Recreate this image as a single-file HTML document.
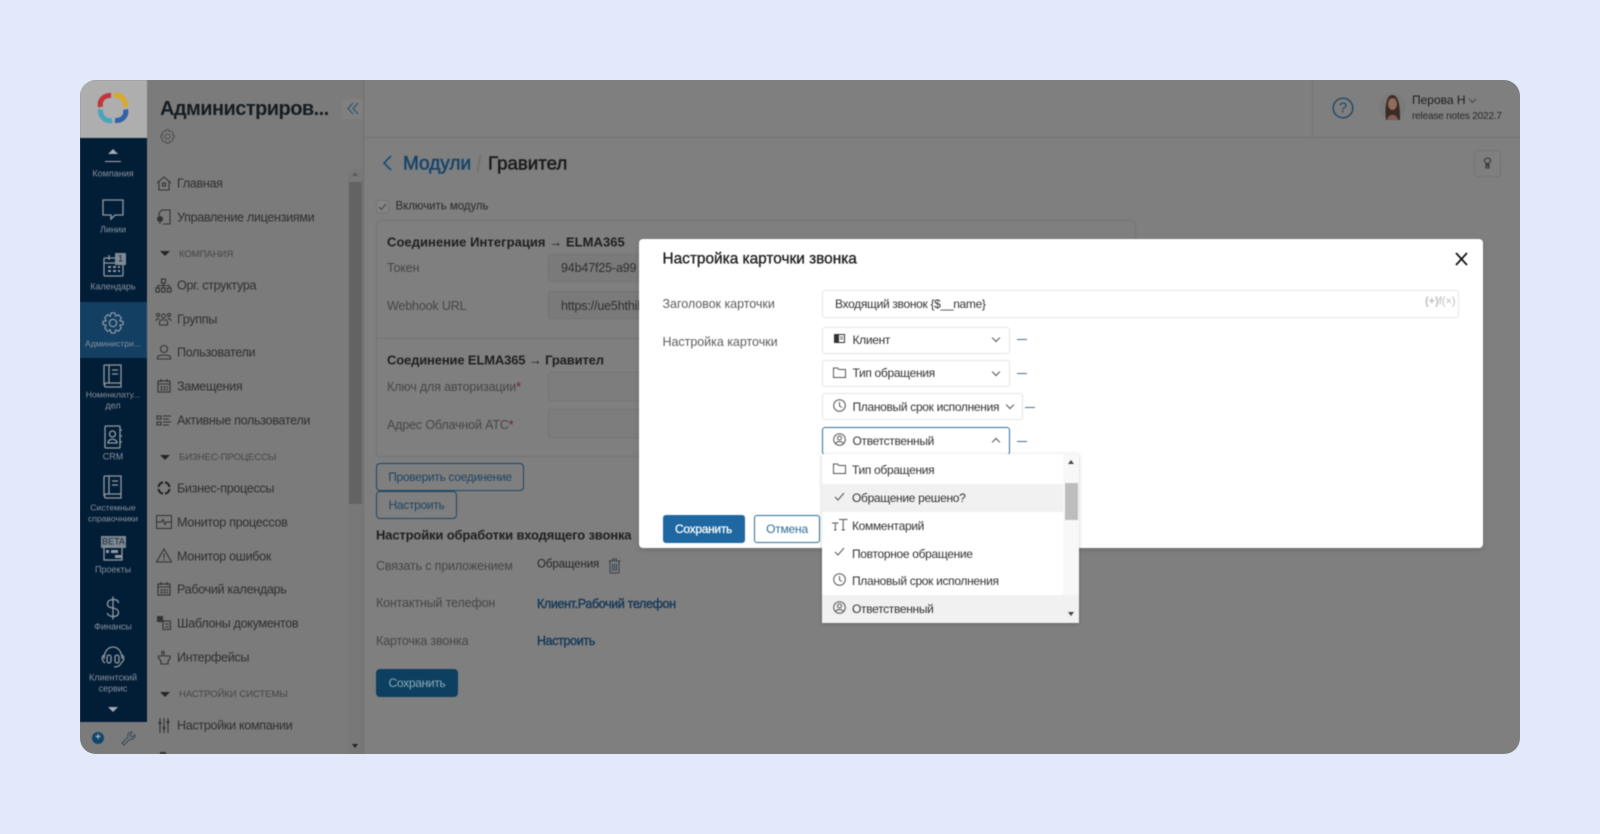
<!DOCTYPE html>
<html lang="ru"><head><meta charset="utf-8"><title>Настройка карточки звонка</title>
<style>
*{box-sizing:border-box}
html,body{margin:0;padding:0;width:1600px;height:834px;overflow:hidden;background:#e2e9fa;font-family:"Liberation Sans","Noto Sans CJK SC",sans-serif}
.abs,.t,.b,svg{position:absolute}
.t{white-space:nowrap;line-height:1;transform:translateY(-50%)}
.c{transform:translate(-50%,-50%);text-align:center}
#frame{position:absolute;left:80px;top:80px;width:1440px;height:674px;border-radius:16px;overflow:hidden;background:#7f7f7f}
#page{position:absolute;left:-80px;top:-80px;width:1600px;height:834px;filter:blur(.4px)}
.s{font-size:9px;color:#87919d;margin-top:.5px}
.m{font-size:12.6px;letter-spacing:-.33px;color:#2f2f2f;left:177px;margin-top:.6px}
.h{font-size:9.6px;letter-spacing:-.1px;color:#464646;left:179px;margin-top:1px}
.tri{position:absolute;left:160px;width:0;height:0;border-left:5px solid transparent;border-right:5px solid transparent;border-top:5px solid #252525}
svg.i{fill:none;stroke:#333;stroke-width:1.1}
svg.n{fill:none;stroke:#929ba5;stroke-width:1.3}
.lb{font-size:12.5px;letter-spacing:-.15px;color:#464646}
.bh{font-size:13px;letter-spacing:-.15px;font-weight:bold;color:#1f1f1f}
.lk{font-size:12.5px;letter-spacing:-.35px;color:#17395a;-webkit-text-stroke:.4px #17395a}
.bt{font-size:12px;letter-spacing:-.3px;color:#1f4463}
.inp{position:absolute;background:#7a7a7a;border:1px solid #747474;border-radius:3px}
.btn{position:absolute;border:1px solid #1c4766;border-radius:4px}
.sel{position:absolute;background:#fff;border:1px solid #e4e4e4;border-radius:3px}
.mt{font-size:12px;letter-spacing:-.32px;color:#333;margin-top:0}
.ml{font-size:12.5px;letter-spacing:-.03px;color:#5d5d5d}
svg.d{fill:none;stroke:#555;stroke-width:1}
.dash{position:absolute;width:10px;height:1px;background:#44708f}
.chev{position:absolute;width:6px;height:6px;border-right:1px solid #555;border-bottom:1px solid #555;transform:rotate(45deg)}
</style></head><body>
<div id="frame"><div id="page">

<!-- logo column -->
<div class="abs" style="left:80px;top:80px;width:67px;height:58px;background:#aeaeae"></div>
<svg style="left:97px;top:92px" width="32" height="32" viewBox="0 0 32 32" fill="none" stroke-width="5">
<path d="M3.500 15C2 8 7 3 14 3.500" stroke="#c0343a"/><path d="M17 3.500C24 2 29 8 28.500 15" stroke="#d8aa28"/>
<path d="M28.500 17.500C30 24 25 29 18 28.500" stroke="#2f62a8"/><path d="M15 28.500C8 30 3 24 3.500 17.500" stroke="#4ba3bd"/></svg>
<div class="abs" style="left:80px;top:138px;width:67px;height:584px;background:#021d36"></div>
<div class="abs" style="left:80px;top:302px;width:67px;height:56px;background:#123f62"></div>
<div class="abs" style="left:80px;top:722px;width:67px;height:32px;background:#7b7b7b"></div>

<div class="abs" style="left:108px;top:149px;width:0;height:0;border-left:5px solid transparent;border-right:5px solid transparent;border-bottom:5px solid #a5adb6"></div>
<div class="abs" style="left:105px;top:161px;width:16px;height:1px;background:#a5adb6"></div>
<div class="t c s" style="left:113px;top:173px">Компания</div>
<svg class="n" style="left:101px;top:198px" width="24" height="24" viewBox="0 0 24 24"><path d="M2 2H22V17H14L10 21V17H2Z"/></svg>
<div class="t c s" style="left:113px;top:229px">Линии</div>
<svg class="n" style="left:102px;top:254px" width="24" height="24" viewBox="0 0 24 24"><rect x="2" y="4" width="19" height="18" rx="1"/><path d="M2 9H21M7 1V6"/><path stroke-width="2" d="M6 13H9M11 13H14M16 13H18M6 17H9M11 17H14M16 17H18"/></svg>
<div class="abs" style="left:115px;top:253px;width:11px;height:12px;background:#7f8a94"></div>
<div class="t c" style="left:120.5px;top:259px;font-size:9px;color:#16263a">1</div>
<div class="t c s" style="left:113px;top:286px">Календарь</div>
<svg class="n" style="left:102px;top:312px" width="22" height="22" viewBox="0 0 24 24"><circle cx="12" cy="12" r="4"/><path d="M10 1H14L15 4.5 18 3 21 6.5 19.500 9.500 23 10.500V13.500L19.500 14.500 21 17.500 18 21 15 19.500 14 23H10L9 19.500 6 21 3 17.500 4.500 14.500 1 13.500V10.500L4.500 9.500 3 6.500 6 3 9 4.500Z"/></svg>
<div class="t c s" style="left:113px;top:343px;font-size:8.6px">Администри...</div>
<svg class="n" style="left:103px;top:364px" width="20" height="24" viewBox="0 0 20 24"><path d="M1 21V2C1 1 2 1 2 1H18V19H3C1 19 1 23 3 23H18V19"/><path d="M6 1V19M9 6H15M9 10H15"/></svg>
<div class="t c s" style="left:113px;top:394px;font-size:8.6px">Номенклату...</div>
<div class="t c s" style="left:113px;top:405px">дел</div>
<svg class="n" style="left:104px;top:425px" width="20" height="24" viewBox="0 0 20 24"><rect x="1" y="1" width="15" height="22" rx="1"/><circle cx="8.500" cy="9" r="3"/><path d="M4 18C4 13 13 13 13 18ZM16 5H18M16 11H18M16 17H18"/></svg>
<div class="t c s" style="left:113px;top:456px">CRM</div>
<svg class="n" style="left:103px;top:475px" width="20" height="24" viewBox="0 0 20 24"><path d="M1 21V2C1 1 2 1 2 1H18V19H3C1 19 1 23 3 23H18V19"/><path d="M6 1V19M9 6H15M9 10H15"/></svg>
<div class="t c s" style="left:113px;top:507px;font-size:8.6px">Системные</div>
<div class="t c s" style="left:113px;top:518px;font-size:8.6px">справочники</div>
<svg class="n" style="left:103px;top:545px" width="20" height="16" viewBox="0 0 20 16"><rect x="1" y="1" width="18" height="14"/></svg>
<div class="abs" style="left:101px;top:536px;width:25px;height:12px;background:#7f8993"></div>
<div class="t c" style="left:113.500px;top:542px;font-size:9px;color:#1a2a3c">BETA</div>
<div class="abs" style="left:106px;top:550px;width:3px;height:3px;background:#929ba5"></div>
<div class="abs" style="left:111px;top:550px;width:7px;height:3px;background:#929ba5"></div>
<div class="abs" style="left:115px;top:555px;width:7px;height:3px;background:#929ba5"></div>
<div class="t c s" style="left:113px;top:569px">Проекты</div>
<svg class="n" style="left:105px;top:596px" width="16" height="24" viewBox="0 0 16 24"><path d="M13.500 7C13 4 11 3.500 8 3.500S2.500 5 2.500 8 5 11.500 8 12 13.500 13.500 13.500 16.500 11 20.500 8 20.500 2.500 19 2.500 17M8 0.500V23.500"/></svg>
<div class="t c s" style="left:113px;top:626px">Финансы</div>
<svg class="n" style="left:101px;top:645px" width="24" height="24" viewBox="0 0 24 24"><path d="M3 14C3 -2 21 -2 21 14"/><rect x="6" y="10" width="4" height="8" rx="2"/><rect x="14" y="10" width="4" height="8" rx="2"/><path d="M3 10C0 12 1 16 4 18M21 10C24 12 23 16 20 18M20 18C19 21 17 22 13 22"/></svg>
<div class="t c s" style="left:113px;top:677px">Клиентский</div>
<div class="t c s" style="left:113px;top:688px">сервис</div>
<div class="abs" style="left:108px;top:707px;width:0;height:0;border-left:5px solid transparent;border-right:5px solid transparent;border-top:5px solid #a5adb6"></div>
<div class="abs" style="left:92px;top:732px;width:12px;height:12px;border-radius:50%;background:#10466d"></div>
<div class="t c" style="left:98px;top:738px;font-size:10px;font-weight:bold;color:#a8b5c0">+</div>
<svg class="i" style="left:121px;top:731px;stroke:#3f4a55" width="15" height="15" viewBox="0 0 15 15"><path d="M1 12L7 6C6 3 8 1 11 1L9 4 11 6 14 4C14 7 12 9 9 8L3 14Z"/></svg>

<!-- menu column -->
<div class="abs" style="left:147px;top:80px;width:216px;height:674px;background:#7b7b7b"></div>
<div class="t" style="left:160px;top:109px;font-size:20px;font-weight:bold;color:#151c22;letter-spacing:-.55px">Администриров...</div>
<div class="abs" style="left:342px;top:99px;width:21px;height:20px;background:#808080"></div>
<svg style="left:347px;top:102px;fill:none;stroke:#2c5472;stroke-width:1.2" width="12" height="13" viewBox="0 0 12 13"><path d="M6 1L1 6.500 6 12M11 1L6 6.500 11 12"/></svg>
<svg class="i" style="left:160px;top:129px;stroke:#3f3f3f" width="15" height="15" viewBox="0 0 24 24"><circle cx="12" cy="12" r="4"/><path d="M10 1H14L15 4.500 18 3 21 6.500 19.500 9.500 23 10.500V13.500L19.500 14.500 21 17.500 18 21 15 19.500 14 23H10L9 19.500 6 21 3 17.500 4.500 14.500 1 13.500V10.500L4.500 9.500 3 6.500 6 3 9 4.500Z"/></svg>

<div class="abs" style="left:348px;top:170px;width:15px;height:584px;background:#787878"></div>
<div class="abs" style="left:349px;top:182px;width:13px;height:322px;background:#636363"></div>
<div class="abs" style="left:352px;top:172px;width:0;height:0;border-left:3.500px solid transparent;border-right:3.500px solid transparent;border-bottom:4px solid #5a5a5a"></div>
<div class="abs" style="left:352px;top:744px;width:0;height:0;border-left:3.500px solid transparent;border-right:3.500px solid transparent;border-top:4px solid #222"></div>

<svg class="i" style="left:156px;top:175px" width="16" height="16" viewBox="0 0 16 16"><path d="M1 8L8 2 15 8M3 7V15H13V7"/><rect x="6.500" y="8" width="3" height="3"/></svg>
<div class="t m" style="top:183px">Главная</div>
<svg class="i" style="left:156px;top:209px" width="16" height="16" viewBox="0 0 16 16"><path d="M6 1H14V15H7M6 1L3 4V7"/><circle cx="4" cy="10" r="2.500" fill="#333"/><path d="M4 12V15"/></svg>
<div class="t m" style="top:217px">Управление лицензиями</div>
<div class="tri" style="top:251px"></div><div class="t h" style="top:253.500px">КОМПАНИЯ</div>
<svg class="i" style="left:155px;top:278px" width="17" height="15" viewBox="0 0 17 15"><rect x="6.500" y="1" width="4" height="4"/><rect x="1" y="10" width="3.500" height="4"/><rect x="6.700" y="10" width="3.500" height="4"/><rect x="12.500" y="10" width="3.500" height="4"/><path d="M8.500 5V10M2.700 10V7.500H14.300V10"/></svg>
<div class="t m" style="top:285px">Орг. структура</div>
<svg class="i" style="left:155px;top:312px" width="17" height="14" viewBox="0 0 17 14"><circle cx="8.500" cy="4" r="2"/><circle cx="3" cy="3" r="1.500"/><circle cx="14" cy="3" r="1.500"/><path d="M4.500 13V10C4.500 7 12.500 7 12.500 10V13ZM1 9C1 6.500 3 6.500 4.500 7M16 9C16 6.500 14 6.500 12.500 7"/></svg>
<div class="t m" style="top:319px">Группы</div>
<svg class="i" style="left:156px;top:344px" width="16" height="16" viewBox="0 0 16 16"><circle cx="8" cy="5" r="3.500"/><path d="M1.500 15V13C1.500 10.500 14.500 10.500 14.500 13V15Z"/></svg>
<div class="t m" style="top:352px">Пользователи</div>
<svg class="i" style="left:157px;top:379px" width="14" height="14" viewBox="0 0 14 14"><rect x="1" y="2" width="12" height="11"/><path d="M1 5H13M4 0V3M10 0V3"/><path stroke-width="1.500" d="M3.500 8H5.500M6.500 8H8.500M9.500 8H11M3.500 10.500H5.500M6.500 10.500H8.500M9.500 10.500H11"/></svg>
<div class="t m" style="top:386px">Замещения</div>
<svg class="i" style="left:156px;top:414px" width="16" height="12" viewBox="0 0 16 12"><path d="M1 2H5V5H1ZM1 8H5V11H1ZM7 2H15M7 5H13M7 8H15M7 11H13"/></svg>
<div class="t m" style="top:420px">Активные пользователи</div>
<div class="tri" style="top:455px"></div><div class="t h" style="top:457px">БИЗНЕС-ПРОЦЕССЫ</div>
<svg style="left:157px;top:481px;fill:none;stroke:#222;stroke-width:2.200" width="14" height="14" viewBox="0 0 14 14"><path d="M1.500 6C2 3 4 1.500 6 1.500M8 1.500C10 1.500 12 3 12.500 6M12.500 8C12 11 10 12.500 8 12.500M6 12.500C4 12.500 2 11 1.500 8"/></svg>
<div class="t m" style="top:488.500px">Бизнес-процессы</div>
<svg class="i" style="left:156px;top:515px" width="16" height="14" viewBox="0 0 16 14"><rect x=".5" y=".5" width="15" height="13"/><path d="M.5 7H5.500L7 4.500 9 9.500 10.500 7H15.500"/></svg>
<div class="t m" style="top:522px">Монитор процессов</div>
<svg class="i" style="left:156px;top:548px" width="16" height="15" viewBox="0 0 16 15"><path d="M8 1L15.500 14H.5ZM8 5.500V10M8 11V12.500"/></svg>
<div class="t m" style="top:556px">Монитор ошибок</div>
<svg class="i" style="left:157px;top:582px" width="14" height="14" viewBox="0 0 14 14"><rect x="1" y="2" width="12" height="11"/><path d="M1 5H13M4 0V3M10 0V3"/><path stroke-width="1.500" d="M3.500 8H5.500M6.500 8H8.500M9.500 8H11M3.500 10.500H5.500M6.500 10.500H8.500M9.500 10.500H11"/></svg>
<div class="t m" style="top:589.500px">Рабочий календарь</div>
<svg class="i" style="left:157px;top:616px" width="14" height="14" viewBox="0 0 14 14"><rect x=".5" y=".5" width="5" height="5" fill="#333"/><rect x="6" y="5" width="7.500" height="8.500"/><path d="M8 8H12M8 11H12"/></svg>
<div class="t m" style="top:623px">Шаблоны документов</div>
<svg class="i" style="left:157px;top:650px" width="14" height="15" viewBox="0 0 14 15"><path d="M5 1.500V6H1.500V8L4 11V14H11V11L13 8.500V6H7V1.500Z"/></svg>
<div class="t m" style="top:657px">Интерфейсы</div>
<div class="tri" style="top:692px"></div><div class="t h" style="top:693.500px">НАСТРОЙКИ СИСТЕМЫ</div>
<svg class="i" style="left:158px;top:718px" width="12" height="15" viewBox="0 0 12 15"><path d="M2 0V15M6 0V15M10 0V15"/><path stroke-width="2" d="M.5 5H3.500M4.500 10H7.500M8.500 4H11.500"/></svg>
<div class="t m" style="top:725.500px">Настройки компании</div>
<div class="abs" style="left:160px;top:752px;width:6px;height:2px;background:#333"></div>

<!-- main -->
<div class="abs" style="left:363px;top:80px;width:1px;height:674px;background:#6f6f6f"></div>
<div class="abs" style="left:364px;top:137px;width:1156px;height:1px;background:#737373"></div>
<div class="abs" style="left:1312px;top:80px;width:1px;height:57px;background:#737373"></div>
<svg style="left:1332px;top:97px;fill:none;stroke:#1f4766;stroke-width:1.400" width="22" height="22" viewBox="0 0 22 22"><circle cx="11" cy="11" r="9.800"/></svg>
<div class="t c" style="left:1343px;top:108px;font-size:15px;color:#1f4766">?</div>
<svg style="left:1379px;top:93px" width="27" height="28" viewBox="0 0 27 28"><circle cx="13.500" cy="14" r="13.500" fill="#7a7a7a"/><path d="M7 27C6 18 6 3 13 2 21 2 21 18 21 27Z" fill="#3c2a24"/><ellipse cx="13.500" cy="11" rx="4.500" ry="6" fill="#8f6c5c"/><path d="M8 27C9 20 18 20 19 27Z" fill="#7d5e52"/></svg>
<div class="t" style="left:1412px;top:100px;font-size:12px;color:#1d1d1d">Перова Н</div>
<svg style="left:1468px;top:98px;fill:none;stroke:#444" width="9" height="6" viewBox="0 0 9 6"><path d="M1 1L4.500 4.500 8 1"/></svg>
<div class="t" style="left:1412px;top:116.500px;font-size:10px;color:#2b2b2b;letter-spacing:-.18px">release notes 2022.7</div>
<div class="abs" style="left:1474px;top:150px;width:27px;height:27px;border:1px solid #747474;border-radius:3px"></div>
<svg style="left:1483px;top:157px;fill:none;stroke:#333;stroke-width:1" width="9" height="13" viewBox="0 0 9 13"><path d="M2 5C0 3 3 1 4.500 1S9 3 7 5L5.500 6.500H3.500ZM3 7.500H6V11H3ZM3 9H6"/></svg>

<svg style="left:381px;top:154px;fill:none;stroke:#1a4f76;stroke-width:1.700" width="12" height="18" viewBox="0 0 12 18"><path d="M10 2L3 9 10 16"/></svg>
<div class="t" style="left:403px;top:163.500px;font-size:19px;color:#17456a;-webkit-text-stroke:.55px #17456a">Модули</div>
<div class="abs" style="left:478px;top:155px;width:2px;height:17px;background:#717171;transform:rotate(10deg)"></div>
<div class="t" style="left:488px;top:163.500px;font-size:18.700px;color:#1a1a1a;-webkit-text-stroke:.5px #1a1a1a">Гравител</div>

<div class="abs" style="left:376px;top:200px;width:13px;height:13px;border:1px solid #747474;background:#858585;border-radius:1px"></div>
<svg style="left:378px;top:203px;fill:none;stroke:#444" width="9" height="8" viewBox="0 0 9 8"><path d="M1 4L3.500 6.500 8 1"/></svg>
<div class="t" style="left:395.500px;top:206.500px;font-size:11.500px;letter-spacing:-.05px;color:#2a2a2a">Включить модуль</div>

<div class="abs" style="left:376px;top:220px;width:760px;height:237px;border:1px solid #757575;border-radius:3px"></div>
<div class="abs" style="left:376px;top:338px;width:760px;height:1px;background:#747474"></div>
<div class="t bh" style="left:387px;top:241.500px;letter-spacing:.05px">Соединение Интеграция → ELMA365</div>
<div class="t lb" style="left:387px;top:267.500px">Токен</div>
<div class="inp" style="left:548px;top:254px;width:100px;height:28px"></div>
<div class="t lb" style="left:561px;top:268px;color:#2f2f2f">94b47f25-a99</div>
<div class="t lb" style="left:387px;top:306px">Webhook URL</div>
<div class="inp" style="left:548px;top:291px;width:100px;height:28px"></div>
<div class="t lb" style="left:561px;top:306px;color:#2f2f2f">https://ue5hthik</div>
<div class="t bh" style="left:387px;top:360px">Соединение ELMA365 → Гравител</div>
<div class="t lb" style="left:387px;top:387px">Ключ для авторизации<span style="color:#7a1a30">*</span></div>
<div class="inp" style="left:548px;top:372px;width:100px;height:29px;background:#7d7d7d"></div>
<div class="t lb" style="left:387px;top:424.500px">Адрес Облачной АТС<span style="color:#7a1a30">*</span></div>
<div class="inp" style="left:548px;top:409px;width:100px;height:29px;background:#7d7d7d"></div>

<div class="btn" style="left:376px;top:463px;width:148px;height:28px"></div>
<div class="t c bt" style="left:450px;top:477px">Проверить соединение</div>
<div class="btn" style="left:376px;top:491px;width:81px;height:28px"></div>
<div class="t c bt" style="left:416.500px;top:505px">Настроить</div>
<div class="t bh" style="left:376px;top:535px">Настройки обработки входящего звонка</div>
<div class="t lb" style="left:376px;top:566px">Связать с приложением</div>
<div class="t" style="left:537px;top:564.500px;font-size:11.500px;letter-spacing:-.1px;color:#252525">Обращения</div>
<svg style="left:608px;top:558px;fill:none;stroke:#36434e;stroke-width:1" width="13" height="16" viewBox="0 0 13 16"><path d="M.5 3H12.500M4.500 3V1H8.500V3M2 3V15H11V3M4.500 5.500V13M6.500 5.500V13M8.500 5.500V13"/></svg>
<div class="t lb" style="left:376px;top:603px">Контактный телефон</div>
<div class="t lk" style="left:537px;top:603.500px">Клиент.Рабочий телефон</div>
<div class="t lb" style="left:376px;top:641px">Карточка звонка</div>
<div class="t lk" style="left:537px;top:640.500px">Настроить</div>
<div class="abs" style="left:376px;top:669px;width:82px;height:28px;border-radius:4px;background:#0d4060"></div>
<div class="t c bt" style="left:417px;top:683px;color:#90a8ba">Сохранить</div>

<!-- modal -->
<div class="abs" style="left:639px;top:239px;width:844px;height:309px;background:#fff;border-radius:4px;box-shadow:0 2px 6px rgba(0,0,0,.15)"></div>
<div class="t" style="left:662.500px;top:258.500px;font-size:15.400px;color:#222;-webkit-text-stroke:.35px #222">Настройка карточки звонка</div>
<svg style="left:1455px;top:252px;fill:none;stroke:#111;stroke-width:1.700" width="13" height="14" viewBox="0 0 13 14"><path d="M1 1L12 13M12 1L1 13"/></svg>
<div class="t ml" style="left:662.500px;top:304px">Заголовок карточки</div>
<div class="sel" style="left:822px;top:290px;width:637px;height:28px"></div>
<div class="t mt" style="left:835px;top:303.500px">Входящий звонок {$__name}</div>
<div class="t" style="left:1425px;top:301.500px;font-size:11px;color:#bdbdbd;font-weight:bold">(+)<span style="font-weight:normal">f(×)</span></div>
<div class="t ml" style="left:662.500px;top:342px">Настройка карточки</div>

<div class="sel" style="left:822px;top:327px;width:188px;height:27px"></div>
<svg style="left:834px;top:334px" width="11" height="9" viewBox="0 0 11 9"><rect x="0" y="0" width="11" height="9" fill="#333"/><rect x="5" y="1" width="5" height="7" fill="#fff"/><path d="M6 3H9M6 5H9" stroke="#333" stroke-width=".7"/></svg>
<div class="t mt" style="left:852.500px;top:339.500px">Клиент</div>
<div class="chev" style="left:993px;top:335px"></div>
<div class="dash" style="left:1017px;top:339px"></div>

<div class="sel" style="left:822px;top:360px;width:188px;height:27px"></div>
<svg class="d" style="left:833px;top:367px" width="13" height="11" viewBox="0 0 13 11"><path d="M.5 1H4.500L6 2.500H12.500V10.500H.5Z"/></svg>
<div class="t mt" style="left:852.500px;top:373px">Тип обращения</div>
<div class="chev" style="left:993px;top:369px"></div>
<div class="dash" style="left:1017px;top:373px"></div>

<div class="sel" style="left:822px;top:393px;width:201px;height:27px"></div>
<svg class="d" style="left:833px;top:399px" width="13" height="13" viewBox="0 0 13 13"><circle cx="6.500" cy="6.500" r="5.800"/><path d="M6.500 3V7L9 8.500"/></svg>
<div class="t mt" style="left:852.500px;top:406.500px">Плановый срок исполнения</div>
<div class="chev" style="left:1007px;top:402px"></div>
<div class="dash" style="left:1025px;top:407px"></div>

<div class="sel" style="left:822px;top:427px;width:188px;height:28px;border-color:#2f6f9f"></div>
<svg class="d" style="left:833px;top:433px" width="13" height="13" viewBox="0 0 13 13"><circle cx="6.500" cy="6.500" r="5.800"/><circle cx="6.500" cy="5" r="2"/><path d="M3 10.500C3 8 10 8 10 10.500"/></svg>
<div class="t mt" style="left:852.500px;top:440.500px">Ответственный</div>
<div class="chev" style="left:993px;top:439px;transform:rotate(225deg)"></div>
<div class="dash" style="left:1017px;top:441px"></div>

<div class="abs" style="left:662.500px;top:515px;width:82px;height:28px;border-radius:3px;background:#1f67a0"></div>
<div class="t c" style="left:703.500px;top:529px;font-size:12px;letter-spacing:-.3px;color:#fff;-webkit-text-stroke:.25px #fff">Сохранить</div>
<div class="abs" style="left:754px;top:515px;width:66px;height:28px;border-radius:3px;border:1px solid #2b6c9d;background:#fff"></div>
<div class="t c" style="left:787px;top:529px;font-size:12px;letter-spacing:-.2px;color:#2f6a97">Отмена</div>

<!-- dropdown -->
<div class="abs" style="left:822px;top:454px;width:257px;height:169px;background:#fff;box-shadow:0 1px 4px rgba(0,0,0,.2)"></div>
<div class="abs" style="left:822px;top:484px;width:241px;height:28px;background:#f1f1f1"></div>
<div class="abs" style="left:822px;top:595px;width:257px;height:28px;background:#f1f1f1"></div>
<div class="abs" style="left:1063px;top:454px;width:16px;height:141px;background:#f8f8f8"></div>
<div class="abs" style="left:1065px;top:483px;width:13px;height:37px;background:#bdbdbd"></div>
<div class="abs" style="left:1068px;top:460px;width:0;height:0;border-left:3.500px solid transparent;border-right:3.500px solid transparent;border-bottom:4px solid #444"></div>
<div class="abs" style="left:1068px;top:612px;width:0;height:0;border-left:3.500px solid transparent;border-right:3.500px solid transparent;border-top:4px solid #444"></div>

<svg class="d" style="left:833px;top:463px" width="13" height="11" viewBox="0 0 13 11"><path d="M.5 1H4.500L6 2.500H12.500V10.500H.5Z"/></svg>
<div class="t mt" style="left:852px;top:470px">Тип обращения</div>
<svg class="d" style="left:834px;top:492px" width="11" height="9" viewBox="0 0 11 9"><path d="M1 5L4 8 10 1"/></svg>
<div class="t mt" style="left:852px;top:498px">Обращение решено?</div>
<svg class="d" style="left:831px;top:518px" width="17" height="13" viewBox="0 0 17 13"><path d="M8 1.500H16.500M12.200 1.500V12M10.500 12H14M1 5H7.500M4.300 5V12M3 12H5.500"/></svg>
<div class="t mt" style="left:852px;top:525.500px">Комментарий</div>
<svg class="d" style="left:834px;top:547px" width="11" height="9" viewBox="0 0 11 9"><path d="M1 5L4 8 10 1"/></svg>
<div class="t mt" style="left:852px;top:553.500px">Повторное обращение</div>
<svg class="d" style="left:833px;top:573px" width="13" height="13" viewBox="0 0 13 13"><circle cx="6.500" cy="6.500" r="5.800"/><path d="M6.500 3V7L9 8.500"/></svg>
<div class="t mt" style="left:852px;top:581px">Плановый срок исполнения</div>
<svg class="d" style="left:833px;top:601px" width="13" height="13" viewBox="0 0 13 13"><circle cx="6.500" cy="6.500" r="5.800"/><circle cx="6.500" cy="5" r="2"/><path d="M3 10.500C3 8 10 8 10 10.500"/></svg>
<div class="t mt" style="left:852px;top:609px">Ответственный</div>

</div></div>
</body></html>
